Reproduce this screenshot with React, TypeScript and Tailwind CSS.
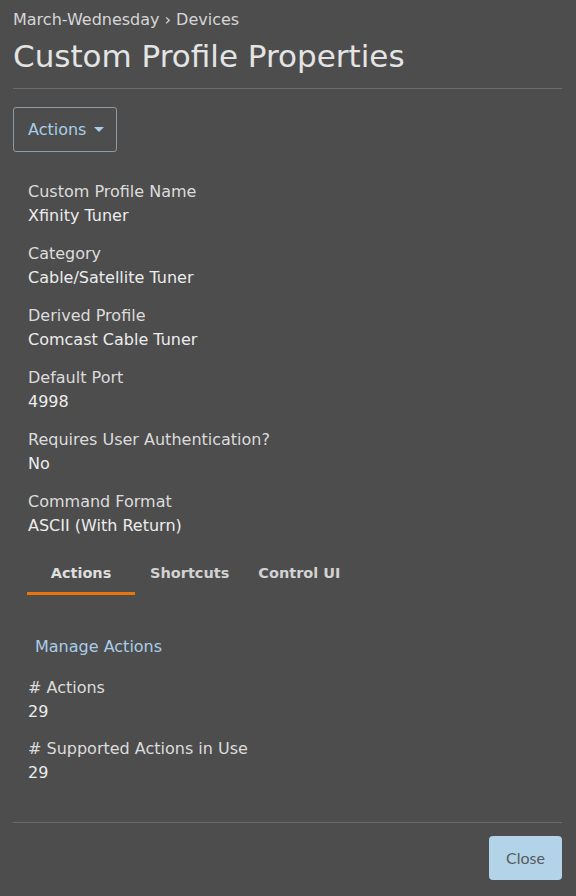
const fields = [
  { label: "Custom Profile Name", value: "Xfinity Tuner" },
  { label: "Category", value: "Cable/Satellite Tuner" },
  { label: "Derived Profile", value: "Comcast Cable Tuner" },
  { label: "Default Port", value: "4998" },
  { label: "Requires User Authentication?", value: "No" },
  { label: "Command Format", value: "ASCII (With Return)" },
];

const stats = [
  { label: "# Actions", value: "29" },
  { label: "# Supported Actions in Use", value: "29" },
];

const Field = ({ label, value }: { label: string; value: string }) => (
  <div className="flex flex-col">
    <span className="text-[16px] leading-[24px] text-[#dcdcdc]">{label}</span>
    <span className="text-[16px] leading-[24px] text-[#ececec]">{value}</span>
  </div>
);

export default function App() {
  return (
    <div
      className="w-[576px] h-[896px] bg-[#4d4d4d] px-[13px] pt-[9px] flex flex-col"
      style={{ fontFamily: "'DejaVu Sans', Lato, sans-serif" }}
    >
      <div className="text-[16px] leading-[22px] text-[#d6d6d6]">
        March-Wednesday › Devices
      </div>
      <h1 className="text-[31px] leading-[40px] text-[#e4e4e4] mt-[5px]">Custom Profile Properties</h1>
      <div className="h-px bg-[#6a6a6a] mt-[12px] mr-[1px]" />

      <div className="mt-[18px]">
        <button className="h-[45px] w-[104px] px-[14px] flex items-center gap-[8px] border border-[#8e9ba6] rounded-[3px] text-[#a9cde8] text-[16px]">
          Actions
          <span className="w-0 h-0 border-l-[5px] border-r-[5px] border-t-[5px] border-l-transparent border-r-transparent border-t-[#a9cde8]" />
        </button>
      </div>

      <div className="pl-[15px] mt-[28px] flex flex-col gap-[14px]">
        {fields.map((f) => (
          <Field key={f.label} label={f.label} value={f.value} />
        ))}
      </div>

      <div className="ml-[14px] mt-[25px] flex items-end">
        <div className="w-[108px] flex justify-center pb-[7px] border-b-[3px] border-[#e8760c] text-[14.5px] font-bold text-[#dedede]">
          Actions
        </div>
        <div className="ml-[15px] pb-[10px] text-[14.5px] font-bold text-[#d2d2d2]">Shortcuts</div>
        <div className="ml-[29px] pb-[10px] text-[14.5px] font-bold text-[#d2d2d2]">Control UI</div>
      </div>

      <div className="ml-[22px] mt-[40px] text-[16px] text-[#a9cde8]">Manage Actions</div>

      <div className="pl-[15px] mt-[17px] flex flex-col gap-[13px]">
        {stats.map((s) => (
          <Field key={s.label} label={s.label} value={s.value} />
        ))}
      </div>

      <div className="h-px bg-[#6a6a6a] mt-[37px] mr-[1px]" />
      <div className="flex justify-end mt-[13px] mr-[1px]">
        <button
          className="w-[73px] h-[44px] rounded-[4px] bg-[#b3d3e9] text-[#555b60] text-[16px]"
          style={{ fontFamily: "Lato, sans-serif" }}
        >
          Close
        </button>
      </div>
    </div>
  );
}
